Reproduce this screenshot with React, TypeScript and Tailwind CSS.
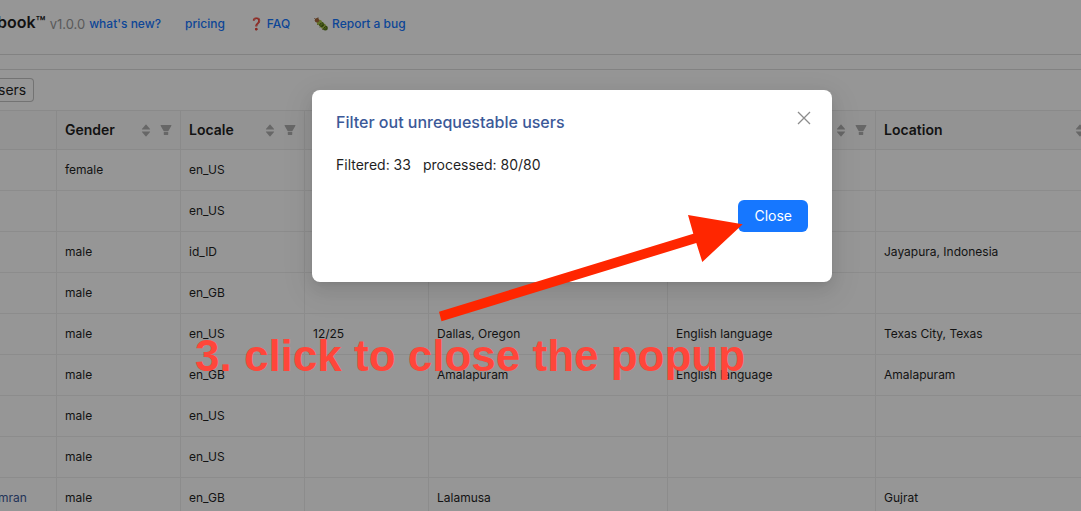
import { AiFillCaretDown, AiFillCaretUp, AiFillFilter } from 'react-icons/ai'

const COLUMNS = [
  { key: 'name', title: '', width: 57 },
  { key: 'gender', title: 'Gender', width: 124 },
  { key: 'locale', title: 'Locale', width: 124 },
  { key: 'birthday', title: 'Birthday', width: 124 },
  { key: 'hometown', title: 'Hometown', width: 239 },
  { key: 'languages', title: 'Languages', width: 208 },
  { key: 'location', title: 'Location', width: 239 },
]

type User = Record<string, string>

const USERS: User[] = [
  { gender: 'female', locale: 'en_US' },
  { locale: 'en_US' },
  { gender: 'male', locale: 'id_ID', location: 'Jayapura, Indonesia' },
  { gender: 'male', locale: 'en_GB' },
  {
    gender: 'male',
    locale: 'en_US',
    birthday: '12/25',
    hometown: 'Dallas, Oregon',
    languages: 'English language',
    location: 'Texas City, Texas',
  },
  {
    gender: 'male',
    locale: 'en_GB',
    hometown: 'Amalapuram',
    languages: 'English language',
    location: 'Amalapuram',
  },
  { gender: 'male', locale: 'en_US' },
  { gender: 'male', locale: 'en_US' },
  { name: 'mran', gender: 'male', locale: 'en_GB', hometown: 'Lalamusa', location: 'Gujrat' },
]

function BugIcon() {
  return (
    <svg width={14} height={14} viewBox="0 0 14 14" aria-hidden="true">
      <path d="M2 3L.5 1.500M3.500 2L4 .5" stroke="#6b4423" fill="none" />
      <path d="M4 7L3.500 8M6.500 9.500L6 10.500M9 11.700L8.500 12.700" stroke="#8a5a2b" fill="none" />
      <circle cx="11.300" cy="11" r="2.500" fill="#5d7d1c" />
      <circle cx="9.400" cy="9.200" r="2.600" fill="#a3bf45" />
      <circle cx="7.400" cy="7.300" r="2.600" fill="#6b8c22" />
      <circle cx="5.400" cy="5.400" r="2.600" fill="#a9c44c" />
      <circle cx="3" cy="3.300" r="2.200" fill="#a86a3c" />
      <path d="M5.500 8L7.500 5.800M7.600 9.900L9.700 7.700M9.700 11.700L11.600 9.400" stroke="#37480f" fill="none" />
    </svg>
  )
}

function Header() {
  return (
    <header className="flex h-[55px] items-start border-b border-[#dedede] pt-3 text-xs leading-6 font-medium text-[#1677ff]">
      <h1 className="-ml-[3px] text-base leading-5 font-semibold text-[#1f1f1f]">book™</h1>
      <span className="ml-1 text-[13px] leading-6 font-normal text-[#999]">v1.0.0</span>
      <nav className="ml-1 flex gap-6 whitespace-nowrap">
        <a href="#news">what's new?</a>
        <a href="#pricing">pricing</a>
        <a href="#faq" className="flex gap-[3px]">
          <span className="text-[#e0101a]">❓</span>
          FAQ
        </a>
        <a href="#bug" className="flex items-center gap-1">
          <BugIcon />
          Report a bug
        </a>
      </nav>
    </header>
  )
}

function UsersTable() {
  return (
    <div className="overflow-hidden">
      <table className="w-full table-fixed border-separate border-spacing-0 border-t border-[#eaeaea] text-left">
        <colgroup>
          {COLUMNS.map((col) => (
            <col key={col.key} style={{ width: col.width }} />
          ))}
        </colgroup>
        <thead>
          <tr>
            {COLUMNS.map((col) => (
              <th
                key={col.key}
                scope="col"
                className="h-[39px] border-r border-b border-[#ebebeb] bg-[#fafafa] pr-[7px] pl-2 text-sm font-semibold"
              >
                {col.title && (
                  <div className="flex items-center">
                    <span className="flex-1">{col.title}</span>
                    <span className="flex flex-col text-[#b0b0b0]">
                      <AiFillCaretUp size={12} />
                      <AiFillCaretDown size={12} className="-mt-[5px]" />
                    </span>
                    <AiFillFilter size={14} className="ml-[7px] text-[#b0b0b0]" />
                  </div>
                )}
              </th>
            ))}
          </tr>
        </thead>
        <tbody>
          {USERS.map((user, i) => (
            <tr key={i}>
              {COLUMNS.map((col) => (
                <td key={col.key} className="h-[41px] border-r border-b border-[#efefef] px-2 text-xs first:pl-0">
                  {col.key === 'name' && user.name ? (
                    <a href="#user" className="-ml-0.5 text-[#3b5998]">
                      {user.name}
                    </a>
                  ) : (
                    user[col.key]
                  )}
                </td>
              ))}
            </tr>
          ))}
        </tbody>
      </table>
    </div>
  )
}

function FilterDialog() {
  return (
    <div className="absolute inset-0 flex items-start justify-center bg-black/41 pt-[90px] pl-[63px]">
      <div
        role="dialog"
        aria-labelledby="dialog-title"
        className="w-[520px] rounded-lg bg-white px-6 pt-5 pb-[50px] shadow-[0_6px_16px_0_rgba(0,0,0,0.08),0_3px_6px_-4px_rgba(0,0,0,0.12),0_9px_28px_8px_rgba(0,0,0,0.05)]"
      >
        <div className="flex justify-between">
          <h2 id="dialog-title" className="text-base leading-6 font-medium text-[#3b5998]">
            Filter out unrequestable users
          </h2>
          <button aria-label="Close dialog" className="-mr-1 h-4 w-4 text-[#8c8c8c]">
            <svg width={16} height={16} viewBox="0 0 16 16" stroke="currentColor" strokeWidth={1.3} aria-hidden="true">
              <path d="M2 2L14 14M14 2L2 14" />
            </svg>
          </button>
        </div>
        <p className="mt-5 flex gap-3 text-sm leading-[22px]">
          <span>Filtered: 33</span>
          <span>processed: 80/80</span>
        </p>
        <div className="mt-6 flex justify-end">
          <button className="h-8 rounded-md bg-[#1677ff] px-4 text-sm text-white">Close</button>
        </div>
      </div>
    </div>
  )
}

function Annotation() {
  return (
    <div className="pointer-events-none absolute inset-0">
      <svg className="absolute top-[215px] left-[439px]" width={304} height={107} viewBox="439 215 304 107">
        <path d="M439 311.700L693.300 233.700L688 215L742.700 224.300L702.300 262L696.300 243L441.500 321.300Z" fill="#ff2600" />
      </svg>
      <p className="absolute top-[332px] left-[195px] font-['Liberation_Sans',Arial,sans-serif] text-[44px] leading-12 font-bold whitespace-nowrap text-[#ff463a]">
        3. click to close the popup
      </p>
    </div>
  )
}

export default function App() {
  return (
    <div className="relative h-screen overflow-hidden bg-white font-[Inter,sans-serif] text-[#1f1f1f]">
      <Header />
      <main className="mt-3.5 border-t border-[#dedede]">
        <div className="flex py-2">
          <button className="-ml-0.5 h-6 rounded-r border border-l-0 border-[#c4c4c4] pr-[7px] text-sm leading-5">
            sers
          </button>
        </div>
        <UsersTable />
      </main>
      <FilterDialog />
      <Annotation />
    </div>
  )
}
